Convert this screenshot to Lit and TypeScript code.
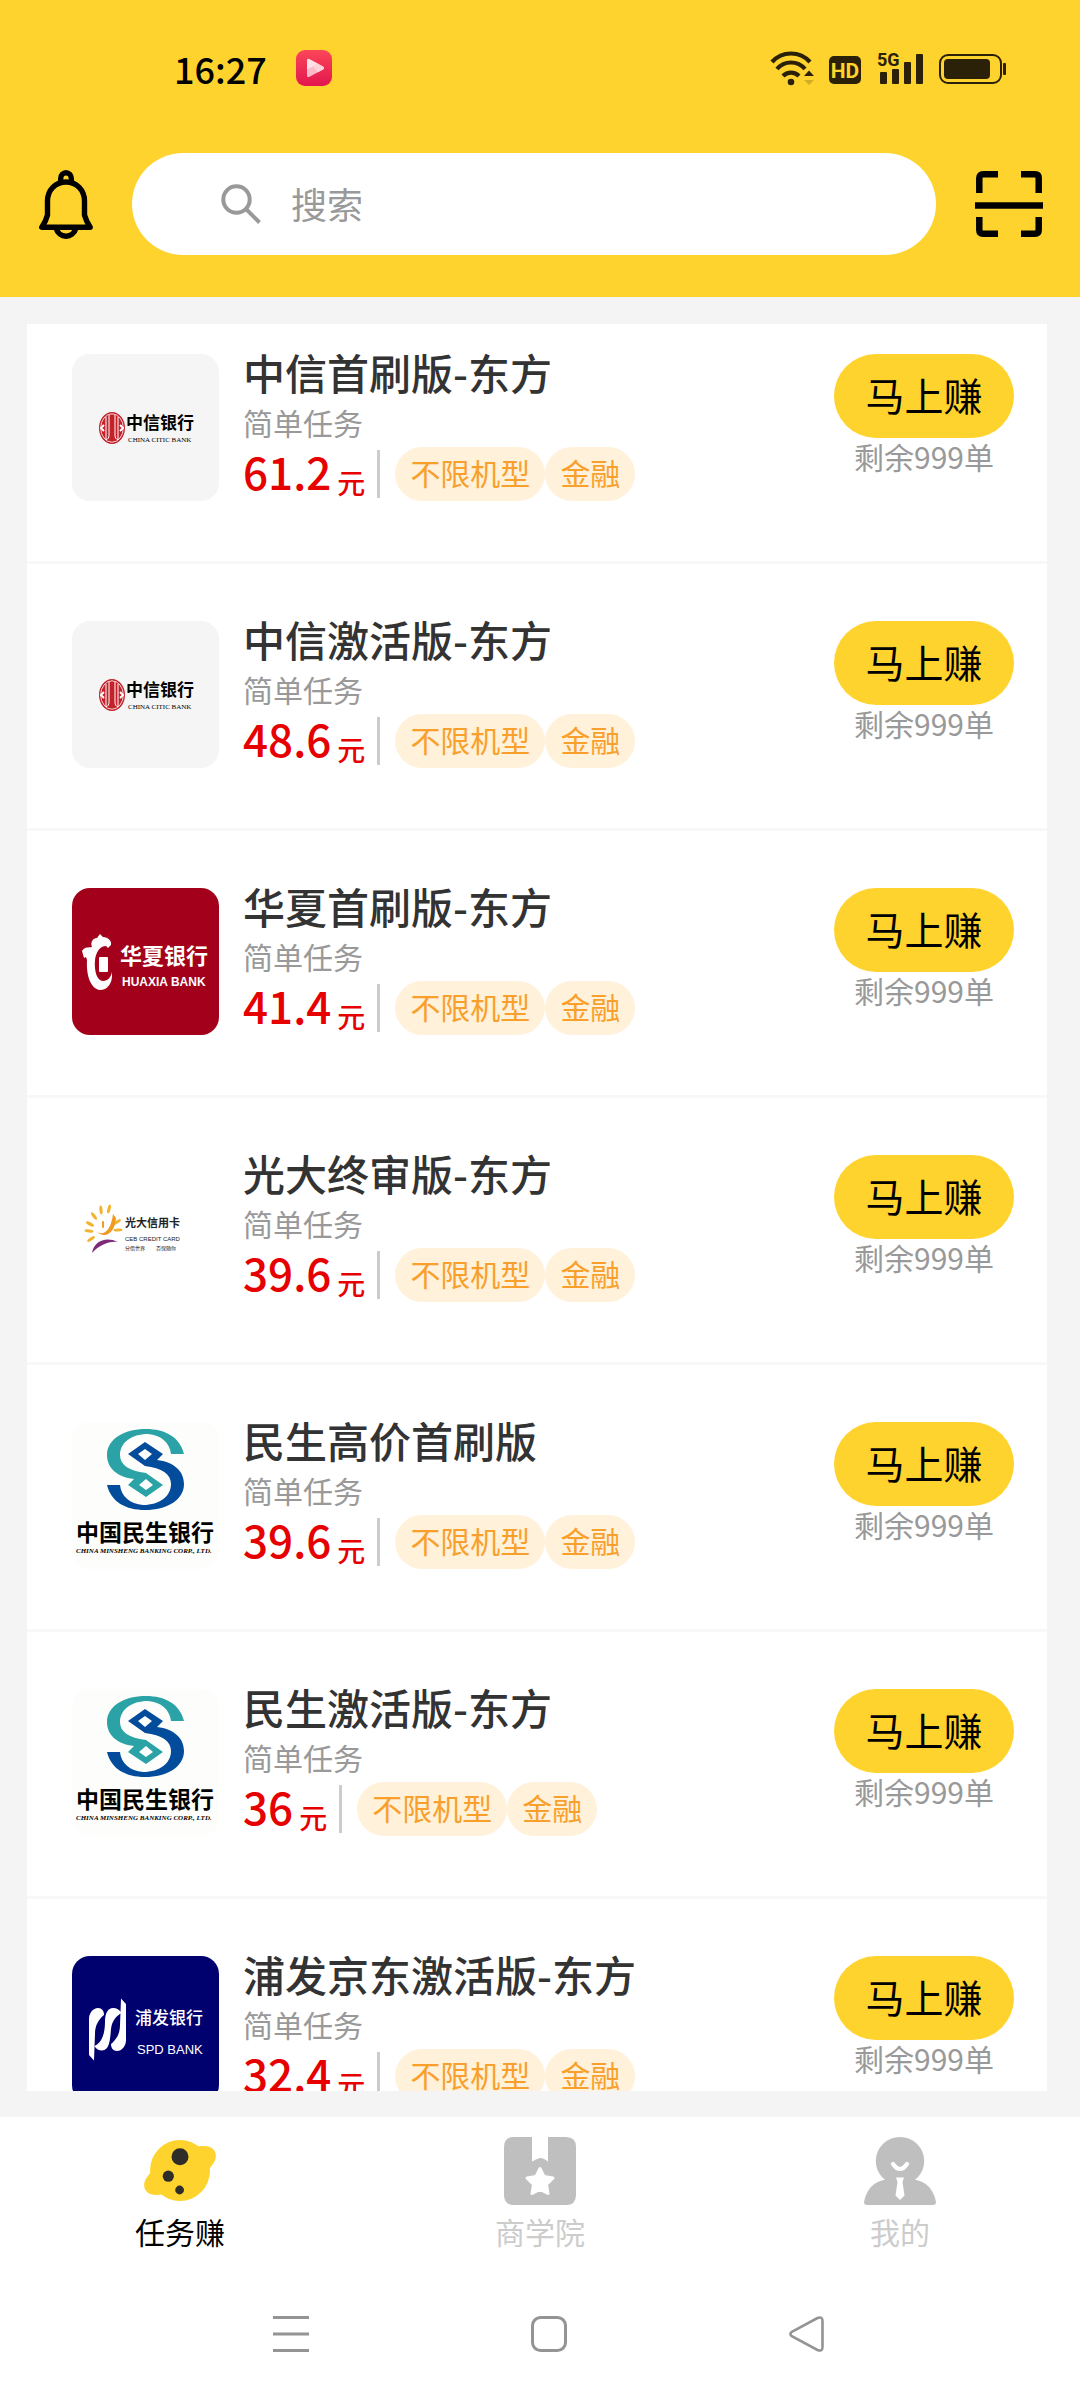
import { LitElement, html, svg, css, nothing } from "lit";
import { customElement, property } from "lit/decorators.js";

type Bank = "citic" | "huaxia" | "ceb" | "minsheng" | "spd";

interface Task {
  bank: Bank;
  title: string;
  price: string;
}

const TASKS: Task[] = [
  { bank: "citic", title: "中信首刷版-东方", price: "61.2" },
  { bank: "citic", title: "中信激活版-东方", price: "48.6" },
  { bank: "huaxia", title: "华夏首刷版-东方", price: "41.4" },
  { bank: "ceb", title: "光大终审版-东方", price: "39.6" },
  { bank: "minsheng", title: "民生高价首刷版", price: "39.6" },
  { bank: "minsheng", title: "民生激活版-东方", price: "36" },
  { bank: "spd", title: "浦发京东激活版-东方", price: "32.4" },
];

const minshengHalf = svg`
  <path d="M112 32C108 15 93 7 74 7C52 7 35 17 35 33C35 46 45 55 62 57L56 63L74 75L91 63L74 51C57 49 48 43 48 33C48 21 59 12 76 12C89 13 98 21 99 32ZM74 57L81 63L74 68L67 63Z" fill-rule="evenodd"/>`;

const spdStem = svg`
  <path d="M17 63C17 57 21 52 26 52C30 52 32 55 32 59C27 63 23 69 23 78L22 104.500L17 99Z"/>`;

const cebPetals: [number, number, number][] = [
  [29, 55, -5], [22, 61, -35], [18, 69, -62], [17, 76, -85], [19, 84, -125],
  [37, 54, 15], [45, 67, 55], [46, 75, 88],
];

const LOGOS: Record<Bank, unknown> = {
  citic: svg`
    <rect width="147" height="147" fill="#f5f5f5"/>
    <ellipse cx="40" cy="74" rx="13" ry="16" fill="#c3222b"/>
    <ellipse cx="40" cy="74" rx="11.300" ry="14.200" fill="none" stroke="#fff" stroke-width=".8"/>
    <path d="M37 61V81C37 84 36 85 34 86M43 61V81C43 84 44 85 46 86M34 63V86M46 63V86" fill="none" stroke="#fff" stroke-width="1"/>
    <path d="M32 71L29 74L32 77M48 71L51 74L48 77" fill="none" stroke="#fff" stroke-width="1.800"/>
    <text x="54" y="75" class="cn b17">中信银行</text>
    <text x="56" y="88" class="serif s7">CHINA CITIC BANK</text>`,
  huaxia: svg`
    <rect width="147" height="147" fill="#a3001b"/>
    <g fill="#fff">
      <path d="M10 63C13 58 17 60 20 59C18 54 21 50 25 50L28 46L31 49C36 49 40 53 39 57L36 60L34 58C28 58 24 64 23 72C22 83 25 93 31 93C36 93 39 89 40 84C41 96 35 102 28 102C19 101 14 88 15 72L14 69L12 70Z"/>
      <rect x="27" y="69" width="9" height="15" rx="1"/>
      <text x="48" y="76" class="cn b22">华夏银行</text>
      <text x="50" y="98" class="sans b12">HUAXIA BANK</text>
    </g>`,
  ceb: svg`
    <g fill="#f2b42c">
      ${cebPetals.map(([x, y, a]) => svg`<ellipse cx=${x} cy=${y} rx="1.600" ry="4.500" transform=${`rotate(${a} ${x} ${y})`}/>`)}
    </g>
    <path d="M24 76C31 82 39 76 41 59L44 63C43 78 33 85 24 76Z" fill="#ef9b22"/>
    <path d="M31 67V72" stroke="#ef9b22" stroke-width="2" stroke-linecap="round"/>
    <path d="M20 98C22 86 34 81 46 87C36 86 28 90 20 98Z" fill="#7c2b78"/>
    <g fill="#222">
      <text x="53" y="72" class="cn b11">光大信用卡</text>
      <text x="53" y="86" class="sans s6">CEB CREDIT CARD</text>
      <text x="53" y="95" class="cn s5">分借世界</text>
      <text x="84" y="95" class="cn s5">百保随你</text>
    </g>`,
  minsheng: svg`
    <rect width="147" height="147" fill="#fdfefb"/>
    <g fill="#2ba3a6">${minshengHalf}</g>
    <g fill="#034b9b" transform="rotate(180 73.5 47.5)">${minshengHalf}</g>
    <text x="4" y="119" class="cn b23">中国民生银行</text>
    <text x="4" y="131" class="serif i7">CHINA MINSHENG BANKING CORP., LTD.</text>`,
  spd: svg`
    <rect width="147" height="147" fill="#00006f"/>
    <g fill="#fff">
      ${spdStem}
      <path d="M33 66C33 57 36 52 41 52C45 52 48 54 49.500 57C44 60 40 65 39 73C38 86 37 94 30 94.500C27 94.500 24 93 22.500 90C30 87 33 77 33 66Z"/>
      <g transform="rotate(180 35.5 73.5)">${spdStem}</g>
      <text x="63" y="68" class="cn m17">浦发银行</text>
      <text x="65" y="98" class="sans s13">SPD BANK</text>
    </g>`,
};

@customElement("bank-logo")
export class BankLogo extends LitElement {
  @property() bank: Bank = "citic";

  static styles = css`
    :host { display: block; }
    .logo { display: block; width: 147px; height: 147px; border-radius: 18px; }
    .cn { font-family: "Noto Sans CJK SC", sans-serif; }
    .sans { font-family: "Liberation Sans", sans-serif; }
    .serif { font-family: "Liberation Serif", serif; }
    .b11 { font-size: 11px; font-weight: 700; }
    .b12 { font-size: 12px; font-weight: 700; }
    .b17 { font-size: 17px; font-weight: 700; }
    .m17 { font-size: 17px; font-weight: 500; }
    .b22 { font-size: 22px; font-weight: 700; }
    .b23 { font-size: 23px; font-weight: 700; }
    .s5 { font-size: 5px; }
    .s6 { font-size: 6px; }
    .s7 { font-size: 7px; }
    .i7 { font-size: 7px; font-weight: 700; font-style: italic; }
    .s13 { font-size: 13px; }
  `;

  render() {
    return html`<svg class="logo" viewBox="0 0 147 147" aria-hidden="true">${LOGOS[this.bank]}</svg>`;
  }
}

@customElement("task-row")
export class TaskRow extends LitElement {
  @property({ attribute: false }) task?: Task;

  static styles = css`
    :host { display: flex; gap: 24px; align-items: flex-start; }
    .info { flex: 1; min-width: 0; display: flex; flex-direction: column; }
    .title { margin: 0 0 14px; font-size: 42px; line-height: 36px; font-weight: 500; color: #333; white-space: nowrap; }
    .kind { margin: 0 0 7px; font-size: 30px; line-height: 36px; color: #999; }
    .meta { display: flex; height: 54px; }
    .amount { font-size: 44px; line-height: 48px; font-weight: 500; color: #e60000; }
    .unit { align-self: flex-end; margin-left: 6px; font-size: 28px; line-height: 38px; font-weight: 500; color: #e60000; }
    .rule { align-self: center; width: 3px; height: 48px; margin: 0 15px 0 12px; background: #ccc; }
    .tag { padding: 0 15px; border-radius: 27px; background: #fff1da; color: #f9a02c; font-size: 30px; line-height: 50px; white-space: nowrap; }
    .action { display: flex; flex-direction: column; align-items: center; }
    .earn { width: 180px; height: 84px; padding: 0 0 4px; border: 0; border-radius: 42px; background: #ffd32d; color: #000; font: inherit; font-size: 39px; line-height: 80px; }
    .left { font-size: 30px; line-height: 36px; color: #999; white-space: nowrap; }
  `;

  render() {
    const t = this.task;
    if (!t) return nothing;
    return html`
      <bank-logo .bank=${t.bank}></bank-logo>
      <div class="info">
        <h2 class="title">${t.title}</h2>
        <p class="kind">简单任务</p>
        <div class="meta">
          <span class="amount">${t.price}</span><span class="unit">元</span>
          <span class="rule"></span>
          <span class="tag">不限机型</span><span class="tag">金融</span>
        </div>
      </div>
      <div class="action">
        <button class="earn" type="button">马上赚</button>
        <span class="left">剩余999单</span>
      </div>
    `;
  }
}

@customElement("app-root")
export class AppRoot extends LitElement {
  static styles = css`
    :host {
      display: flex; flex-direction: column; height: 100vh; overflow: hidden;
      background: #f4f4f4; color: #000;
      font-family: "Noto Sans CJK SC", sans-serif;
    }
    svg { display: block; flex: none; overflow: visible; }
    button { padding: 0; border: 0; background: none; }
    .top { flex: none; background: #ffd32d; }
    .status { display: flex; align-items: center; justify-content: space-between; height: 136px; padding: 0 74px 0 174px; }
    .clock { display: flex; align-items: center; gap: 29px; font-size: 36px; line-height: 36px; font-weight: 500; }
    .signals { display: flex; gap: 16px; }
    .label { font-family: Roboto, "Liberation Sans", sans-serif; font-weight: 700; }
    .hd { font-size: 21px; }
    .net { font-size: 18px; }
    .search-row { display: flex; align-items: center; gap: 39px; padding: 17px 37px 42px 39px; }
    .search { flex: 1; min-width: 0; display: flex; align-items: center; gap: 30px; height: 102px; padding: 0 60px 0 89px; border-radius: 51px; background: #fff; box-sizing: border-box; }
    .field { flex: 1; min-width: 0; height: 60px; padding: 0 0 2px; border: 0; outline: 0; background: none; font: inherit; font-size: 36px; color: #333; }
    .field::placeholder { color: #999; opacity: 1; }
    .content { flex: 1; min-height: 0; display: flex; padding: 27px 33px 26px 27px; }
    .list { flex: 1; min-width: 0; margin: 0; padding: 0; list-style: none; background: #fff; overflow-y: auto; scrollbar-width: none; }
    .item { padding: 57px 33px 60px 45px; border-bottom: 3px solid #f8f8f8; }
    .item:first-child { padding-top: 30px; }
    .tabs { flex: none; display: flex; padding: 20px 0 18px; background: #fff; }
    .tab { flex: 1; display: flex; flex-direction: column; align-items: center; gap: 8px; font-size: 30px; line-height: 37px; color: #ccc; text-decoration: none; }
    .tab.active { color: #000; }
    .system { flex: none; display: flex; justify-content: center; align-items: center; gap: 222px; height: 132px; padding-left: 18px; background: #fff; }
  `;

  private renderStatus() {
    return html`
      <div class="status">
        <div class="clock">
          <span>16:27</span>
          <svg width="36" height="36" viewBox="0 0 36 36" aria-hidden="true">
            <defs>
              <linearGradient id="app" x1="0" y1="0" x2="0" y2="1">
                <stop offset="0" stop-color="#fb4658"/><stop offset="1" stop-color="#e2164f"/>
              </linearGradient>
            </defs>
            <rect width="36" height="36" rx="9" fill="url(#app)"/>
            <path d="M11 10.5Q11 8 13.500 9.200L27 16.500Q29 18 27 19.500L13.500 26.800Q11 28 11 25.500Z" fill="#fcb9c6"/>
            <path d="M11 10.5Q11 8 13.500 9.200L22 13.800L11 19.500Z" fill="#fde3e8"/>
            <path d="M22 13.800L27 16.500Q29 18 27 19.500L22 22.200L17 16.500Z" fill="#fdd3db"/>
          </svg>
        </div>
        <div class="signals">
          <svg width="42" height="34" viewBox="0 0 42 34" fill="none" stroke="#2a2108" stroke-width="4.200" aria-hidden="true">
            <path d="M1 11A25.500 25.500 0 0 1 39 11M6 18A18.300 18.300 0 0 1 34 18M12 25A11 11 0 0 1 28 25"/>
            <circle cx="20" cy="31" r="3.300" fill="#2a2108" stroke="none"/>
            <path d="M33 25L38 19.500L43 25Z" fill="#2a2108" stroke="none"/>
            <path d="M33 29H43L38 34Z" fill="#d2ad22" stroke="none"/>
          </svg>
          <svg width="32" height="34" viewBox="0 0 32 34" aria-hidden="true">
            <rect y="5" width="32" height="28" rx="5" fill="#2a2108"/>
            <text class="label hd" x="16" y="27" text-anchor="middle" fill="#ffd32d">HD</text>
          </svg>
          <svg width="46" height="34" viewBox="0 0 46 34" fill="#2a2108" aria-hidden="true">
            <text class="label net" x="0" y="15">5G</text>
            <rect x="3" y="21" width="7" height="12" rx="1"/>
            <rect x="15" y="18" width="7" height="15" rx="1"/>
            <rect x="27" y="11" width="7" height="22" rx="1"/>
            <rect x="39" y="3" width="7" height="30" rx="1"/>
          </svg>
          <svg width="67" height="34" viewBox="0 0 67 34" fill="#2a2108" aria-hidden="true">
            <rect x="1" y="4" width="61" height="28" rx="8" fill="none" stroke="#2a2108" stroke-width="2"/>
            <rect x="5" y="8" width="46" height="20" rx="4"/>
            <rect x="64" y="12" width="3" height="12" rx="1"/>
          </svg>
        </div>
      </div>
    `;
  }

  render() {
    return html`
      <header class="top">
        ${this.renderStatus()}
        <div class="search-row">
          <button type="button" aria-label="消息">
            <svg width="54" height="69" viewBox="0 0 54 69" fill="none" stroke="#000" stroke-width="5.400" stroke-linejoin="round">
              <path d="M8.500 31V45Q7 51 2.800 57.300H51.200Q47 51 45.500 45V31C45.500 20 37.500 12 27 12S8.500 20 8.500 31Z"/>
              <path d="M21.700 12.500V8.500A5.300 5.800 0 0 1 32.300 8.500V12.500M17 58C20 69 34 69 37 58"/>
            </svg>
          </button>
          <label class="search">
            <svg width="40" height="40" viewBox="0 0 40 40" fill="none" stroke="#999" stroke-width="4" aria-hidden="true">
              <circle cx="15.500" cy="15.500" r="13.200"/>
              <path d="M25 25L38.500 38.500"/>
            </svg>
            <input class="field" type="search" placeholder="搜索" aria-label="搜索">
          </label>
          <button type="button" aria-label="扫一扫">
            <svg width="68" height="66" viewBox="0 0 68 66" fill="none" stroke="#000" stroke-width="6.500">
              <path d="M4.300 22V7Q4.300 3.300 8 3.300H23M46 3.300H60Q63.700 3.300 63.700 7V22M4.300 46V59Q4.300 62.700 8 62.700H23M46 62.700H60Q63.700 62.700 63.700 59V46"/>
              <path d="M0 34.500H68"/>
            </svg>
          </button>
        </div>
      </header>
      <main class="content">
        <ul class="list">
          ${TASKS.map((t) => html`<li class="item"><task-row .task=${t}></task-row></li>`)}
        </ul>
      </main>
      <nav class="tabs">
        <a class="tab active" href="#tasks" aria-current="page">
          <svg width="72" height="68" viewBox="0 -3 72 68" aria-hidden="true">
            <g fill="#ffd32d">
              <ellipse cx="36" cy="30.500" rx="30" ry="30.500"/>
              <path d="M54 6.500C66 4.500 73 9 71.700 18C71 22 68 25 66 28L50 20Z"/>
              <path d="M18 54.500C6 56.500 -1 52 0.300 43C1 39 4 36 6 33L22 41Z"/>
            </g>
            <g fill="#2e2d2a">
              <circle cx="36" cy="16.700" r="8.500"/><circle cx="24.300" cy="36.200" r="5.600"/><circle cx="35.600" cy="50" r="4.400"/>
            </g>
          </svg>
          <span>任务赚</span>
        </a>
        <a class="tab" href="#school">
          <svg width="72" height="68" viewBox="0 0 72 68" aria-hidden="true">
            <path d="M10 0H28V24.500Q33 21.500 36 21T44 24.500V0H62Q72 0 72 10V58Q72 68 62 68H10Q0 68 0 58V10Q0 0 10 0Z" fill="#bfbfbf"/>
            <path d="M36 31.500L40 39.500L49 41L42.500 47.500L44 56.500L36 52.300L28 56.500L29.500 47.500L23 41L32 39.500Z" fill="#fff" stroke="#fff" stroke-width="3" stroke-linejoin="round"/>
          </svg>
          <span>商学院</span>
        </a>
        <a class="tab" href="#me">
          <svg width="72" height="68" viewBox="0 0 72 68" aria-hidden="true">
            <g fill="#bfbfbf">
              <ellipse cx="36" cy="24" rx="24.200" ry="24"/>
              <path d="M22 42.500H50C62 44 70 53 72 65Q72 68 69 68H3Q0 68 0 65C2 53 10 44 22 42.500Z"/>
            </g>
            <path d="M29 27Q36 37 43 27" fill="none" stroke="#fff" stroke-width="4.200" stroke-linecap="round"/>
            <path d="M32 40.500H40L38.500 45L40.500 58.500L36 63L31.500 58.500L33.500 45Z" fill="#fff"/>
          </svg>
          <span>我的</span>
        </a>
      </nav>
      <div class="system">
        <button type="button" aria-label="菜单">
          <svg width="36" height="36" viewBox="0 0 36 36" stroke="#949494" stroke-width="3"><path d="M0 1.500H36M0 18H36M0 34.500H36"/></svg>
        </button>
        <button type="button" aria-label="主页">
          <svg width="36" height="36" viewBox="0 0 36 36"><rect x="1.500" y="1.500" width="33" height="33" rx="8" fill="none" stroke="#949494" stroke-width="3"/></svg>
        </button>
        <button type="button" aria-label="返回">
          <svg width="36" height="36" viewBox="0 0 36 36"><path d="M2.800 15.800L28.500 2Q33.500 0 33.500 5V31Q33.500 36 28.500 34L2.800 20.200Q0 18 2.800 15.800Z" fill="none" stroke="#949494" stroke-width="2.600"/></svg>
        </button>
      </div>
    `;
  }
}
